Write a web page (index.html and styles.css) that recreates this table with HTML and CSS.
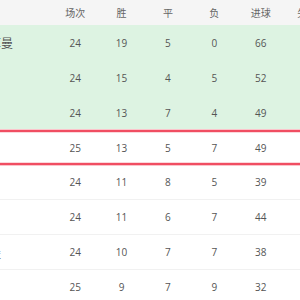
FILE: index.html
```html
<!DOCTYPE html>
<html lang="zh">
<head>
<meta charset="utf-8">
<link rel="stylesheet" href="styles.css">
</head>
<body>
<div class="table">
  <div class="row head">
    <div class="name">球队</div><div>场次</div><div>胜</div><div>平</div><div>负</div><div>进球</div><div>失球</div>
  </div>
  <div class="row green">
    <div class="name">巴黎圣日耳曼</div><div>24</div><div>19</div><div>5</div><div>0</div><div>66</div><div>19</div>
  </div>
  <div class="row green">
    <div class="name">马赛</div><div>24</div><div>15</div><div>4</div><div>5</div><div>52</div><div>29</div>
  </div>
  <div class="row green">
    <div class="name">雷恩</div><div>24</div><div>13</div><div>7</div><div>4</div><div>49</div><div>31</div>
  </div>
  <div class="row mark">
    <div class="name">里尔</div><div>25</div><div>13</div><div>5</div><div>7</div><div>49</div><div>24</div>
  </div>
  <div class="row">
    <div class="name">兰斯</div><div>24</div><div>11</div><div>8</div><div>5</div><div>39</div><div>21</div>
  </div>
  <div class="row">
    <div class="name">尼斯</div><div>24</div><div>11</div><div>6</div><div>7</div><div>44</div><div>38</div>
  </div>
  <div class="row">
    <div class="name">斯特拉斯堡</div><div>24</div><div>10</div><div>7</div><div>7</div><div>38</div><div>32</div>
  </div>
  <div class="row">
    <div class="name">里昂</div><div>25</div><div>9</div><div>7</div><div>9</div><div>32</div><div>25</div>
  </div>
</div>
</body>
</html>
```
FILE: styles.css
```css
html, body {
  margin: 0;
  padding: 0;
  background: #ffffff;
  overflow: hidden;
}
body {
  width: 300px;
  height: 300px;
  font-family: "Open Sans", "Noto Sans CJK SC", sans-serif;
  color: #555;
}
.table {
  margin-left: -60px;
  width: 420px;
}
.row {
  display: grid;
  grid-template-columns: 112px repeat(6, 46.4px);
  height: 35px;
  align-items: center;
  box-sizing: border-box;
  border-bottom: 1px solid #f1f1f1;
  font-size: 10px;
}
.row > div {
  text-align: center;
}
.row > .name {
  text-align: left;
  padding-left: 1px;
  font-size: 12px;
  font-family: "Noto Sans CJK SC", sans-serif;
  color: #555;
}
.head {
  height: 25px;
  background: #f5f5f5;
  border-bottom: none;
  color: #666;
  font-family: "Noto Sans CJK SC", sans-serif;
}
.green {
  background: #ddf3e2;
  border-bottom: none;
}
.mark {
  border-top: 2px solid #f04e62;
  border-bottom: 2px solid #f04e62;
  box-shadow: 0 -1px 0 #fbc4cb, 0 1px 0 #fbc4cb, inset 0 1px 0 #fbd8dc, inset 0 -1px 0 #fbd8dc;
  position: relative;
}
```
